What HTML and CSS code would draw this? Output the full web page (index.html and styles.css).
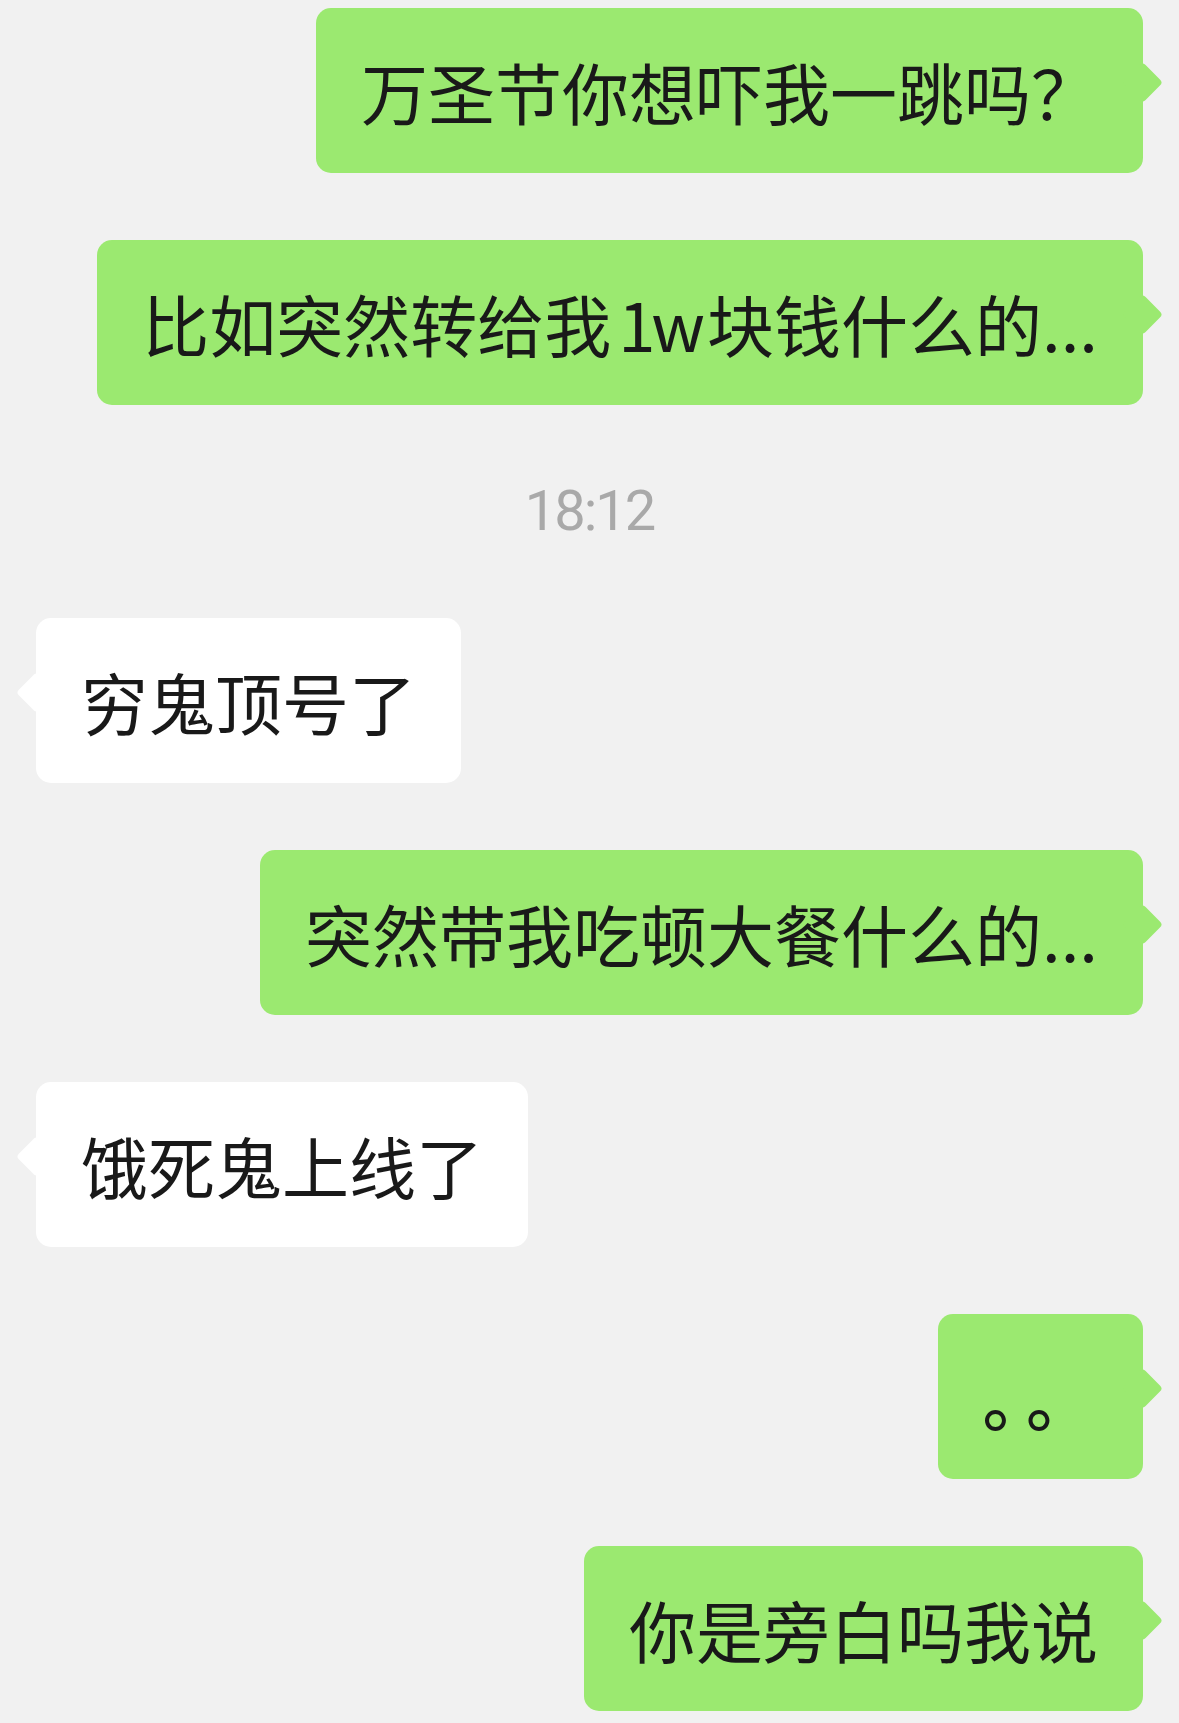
FILE: index.html
```html
<!DOCTYPE html>
<html lang="zh-CN">
<head>
  <meta charset="UTF-8">
  <title>聊天记录</title>
  <link rel="stylesheet" href="styles.css">
</head>
<body>
  <div class="chat">
    <div class="row me"><div class="bubble">万圣节你想吓我一跳吗？</div></div>
    <div class="row me"><div class="bubble">比如突然转给我<span class="num">1w</span>块钱什么的...</div></div>

    <div class="time">18:12</div>

    <div class="row other"><div class="bubble">穷鬼顶号了</div></div>
    <div class="row me"><div class="bubble">突然带我吃顿大餐什么的...</div></div>
    <div class="row other"><div class="bubble">饿死鬼上线了</div></div>
    <div class="row me"><div class="bubble dots">。。</div></div>
    <div class="row me"><div class="bubble">你是旁白吗我说</div></div>
  </div>
</body>
</html>
```

FILE: styles.css
```css
body {margin: 0; padding: 8px 36px; background: #f1f1f1; color: #191919; font: 67px/93px "Noto Sans CJK SC", "Noto Sans", sans-serif;}
.chat {display: flex; flex-direction: column; gap: 67px;}
.row {display: flex;}
.row.me {justify-content: flex-end;}
.row.other {justify-content: flex-start;}

.bubble {position: relative; padding: 36px 45px; border-radius: 15px; white-space: nowrap;}
.bubble::after {content: ""; position: absolute; top: 60px; width: 29px; height: 29px; border-radius: 4px; transform: rotate(45deg);}
.me .bubble {background: #9be970;}
.me .bubble::after {right: -14px; background: #9be970;}
.other .bubble {background: #fff;}
.other .bubble::after {left: -14px; background: #fff;}

.num {margin: 0 6px 0 7px; letter-spacing: -4px;}
.bubble.dots {padding-right: 40px; letter-spacing: 10px; font-weight: 500;}

.time {height: 79px; text-align: center; color: #a9a9a9; font: 56px/79px Roboto, "Noto Sans", sans-serif; letter-spacing: -2px;}
```
